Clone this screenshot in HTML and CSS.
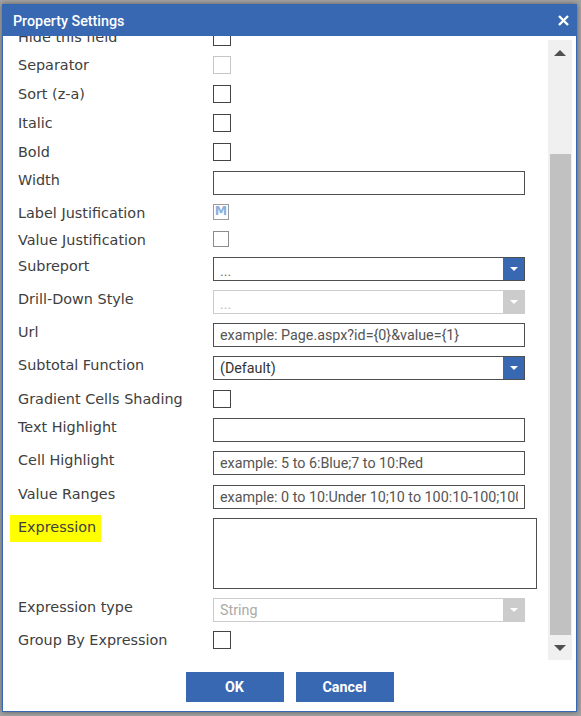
FILE: index.html
```html
<!DOCTYPE html>
<html>
<head>
<meta charset="utf-8">
<title>Property Settings</title>
<link rel="stylesheet" href="styles.css">
</head>
<body>
<div class="dialog">
  <div class="titlebar">
    <span class="title">Property Settings</span>
    <svg class="close" viewBox="0 0 11 11" width="11" height="11"><path d="M1 1L10 10M10 1L1 10" stroke="#fff" stroke-width="2.4" stroke-linecap="butt"/></svg>
  </div>
  <div class="main">
    <div class="content">
      <div class="rows">
        <div class="row row-short"><div class="lbl">Hide this field</div><div class="cb"></div></div>
        <div class="row"><div class="lbl">Separator</div><div class="cb cb-light"></div></div>
        <div class="row"><div class="lbl">Sort (z-a)</div><div class="cb"></div></div>
        <div class="row"><div class="lbl">Italic</div><div class="cb"></div></div>
        <div class="row row-short"><div class="lbl">Bold</div><div class="cb"></div></div>
        <div class="row"><div class="lbl">Width</div><input class="field" type="text" value="" readonly></div>
        <div class="row"><div class="lbl">Label Justification</div><div class="mbox">M</div></div>
        <div class="row"><div class="lbl">Value Justification</div><div class="cb cb-small"></div></div>
        <div class="row"><div class="lbl">Subreport</div><div class="field select"><span class="val dots">...</span><span class="arr"></span></div></div>
        <div class="row"><div class="lbl">Drill-Down Style</div><div class="field select disabled"><span class="val dots">...</span><span class="arr"></span></div></div>
        <div class="row"><div class="lbl">Url</div><input class="field" type="text" value="example: Page.aspx?id={0}&amp;value={1}" readonly></div>
        <div class="row row-tall"><div class="lbl">Subtotal Function</div><div class="field select"><span class="val dark">(Default)</span><span class="arr"></span></div></div>
        <div class="row row-short"><div class="lbl">Gradient Cells Shading</div><div class="cb"></div></div>
        <div class="row"><div class="lbl">Text Highlight</div><input class="field" type="text" value="" readonly></div>
        <div class="row row-tall"><div class="lbl">Cell Highlight</div><input class="field" type="text" value="example: 5 to 6:Blue;7 to 10:Red" readonly></div>
        <div class="row"><div class="lbl">Value Ranges</div><input class="field" type="text" value="example: 0 to 10:Under 10;10 to 100:10-100;100 to 1000:Over 100" readonly></div>
        <div class="row"><div class="lbl"><span class="hl">Expression</span></div><div class="area"></div></div>
        <div class="row"><div class="lbl">Expression type</div><div class="field select disabled"><span class="val faded">String</span><span class="arr"></span></div></div>
        <div class="row"><div class="lbl">Group By Expression</div><div class="cb"></div></div>
      </div>
    </div>
    <div class="sb">
      <div class="sb-btn sb-up"></div>
      <div class="sb-track"><div class="sb-thumb"></div></div>
      <div class="sb-btn sb-down"></div>
    </div>
  </div>
  <div class="footer">
    <button class="btn">OK</button>
    <button class="btn">Cancel</button>
  </div>
</div>
</body>
</html>
```
FILE: styles.css
```css
html, body {
  margin: 0;
  height: 716px;
  overflow: hidden;
}
body {
  background: #a3a3a3;
  padding: 4px 0 0 2px;
  box-sizing: border-box;
}
.dialog {
  width: 575px;
  height: 708px;
  box-sizing: border-box;
  border: 1px solid #3768b1;
  background: #fff;
  display: flex;
  flex-direction: column;
  box-shadow: 0 0 5px rgba(0, 0, 0, 0.45);
}
.titlebar {
  flex: none;
  height: 31px;
  background: #3768b1;
  display: flex;
  align-items: center;
  justify-content: space-between;
  padding: 0 7px 0 10px;
}
.title {
  color: #fff;
  font: 500 14.3px Roboto, "Liberation Sans", sans-serif;
}
.close {
  display: block;
}
.main {
  flex: none;
  height: 624px;
  display: flex;
}
.content {
  flex: 1;
  overflow: hidden;
  padding-left: 15px;
}
.rows {
  margin-top: -8px;
}
.row {
  display: flex;
  align-items: flex-start;
}
.lbl {
  width: 195px;
  flex: none;
  font: 14.4px "DejaVu Sans", Verdana, sans-serif;
  line-height: 18px;
  color: #404040;
  white-space: nowrap;
}
.hl {
  background: #ffff00;
  padding: 4px 5px 7px 8px;
  margin-left: -8px;
}
.cb {
  width: 18px;
  height: 18px;
  box-sizing: border-box;
  border: 1px solid #444;
  margin-bottom: 11px;
}
.row-short .cb {
  margin-bottom: 10px;
}
.cb-light {
  border-color: #c6c6c6;
}
.cb-small {
  width: 16px;
  height: 16px;
  border-color: #8c8c8c;
  margin-bottom: 10px;
}
.mbox {
  width: 16px;
  height: 16px;
  box-sizing: border-box;
  border: 1px solid #9a9a9a;
  margin-bottom: 11px;
  font: bold 12.5px "DejaVu Sans", sans-serif;
  line-height: 12px;
  color: #8eb0df;
  text-align: center;
  overflow: hidden;
}
.field {
  width: 312px;
  height: 24px;
  box-sizing: border-box;
  border: 1px solid #4f4f4f;
  border-radius: 0;
  margin: 0 0 9px 0;
  padding: 0 6px;
  background: #fff;
  font: 14.3px Roboto, "Liberation Sans", sans-serif;
  color: #555;
  outline: none;
}
.row-tall .field {
  margin-bottom: 10px;
}
.select {
  display: flex;
  align-items: stretch;
  padding-right: 0;
}
.val {
  flex: 1;
  display: flex;
  align-items: center;
  white-space: nowrap;
  overflow: hidden;
}
.dots {
  color: #777;
  padding-top: 3px;
}
.dark {
  color: #333;
}
.faded {
  color: #aaa;
}
.arr {
  width: 21px;
  flex: none;
  background: #3768b1;
  display: flex;
  align-items: center;
  justify-content: center;
}
.arr::after {
  content: "";
  border-left: 4px solid transparent;
  border-right: 4px solid transparent;
  border-top: 4px solid #fff;
}
.disabled {
  border-color: #cccccc;
}
.disabled .dots {
  color: #bbb;
}
.disabled .arr {
  background: #cccccc;
}
.area {
  width: 324px;
  height: 71px;
  box-sizing: border-box;
  border: 1px solid #4f4f4f;
  margin-bottom: 9px;
}
.sb {
  flex: none;
  width: 24px;
  margin: 4px 4px 0 0;
  background: #f0f0f0;
  display: flex;
  flex-direction: column;
}
.sb-btn {
  flex: none;
  height: 26px;
  display: flex;
  align-items: center;
  justify-content: center;
}
.sb-up::after {
  content: "";
  border-left: 6px solid transparent;
  border-right: 6px solid transparent;
  border-bottom: 6px solid #505050;
}
.sb-down::after {
  content: "";
  border-left: 6px solid transparent;
  border-right: 6px solid transparent;
  border-top: 6px solid #505050;
}
.sb-track {
  flex: 1;
  padding: 88px 1px 0 2px;
}
.sb-thumb {
  height: 481px;
  background: #c1c1c1;
}
.footer {
  flex: none;
  height: 51px;
  box-sizing: border-box;
  padding-top: 12px;
  display: flex;
  justify-content: center;
  align-items: flex-start;
  gap: 12px;
}
.btn {
  width: 98px;
  height: 30px;
  border: 0;
  border-radius: 0;
  background: #3768b1;
  color: #fff;
  font: bold 14.3px Roboto, "Liberation Sans", sans-serif;
  padding: 0;
}
```
